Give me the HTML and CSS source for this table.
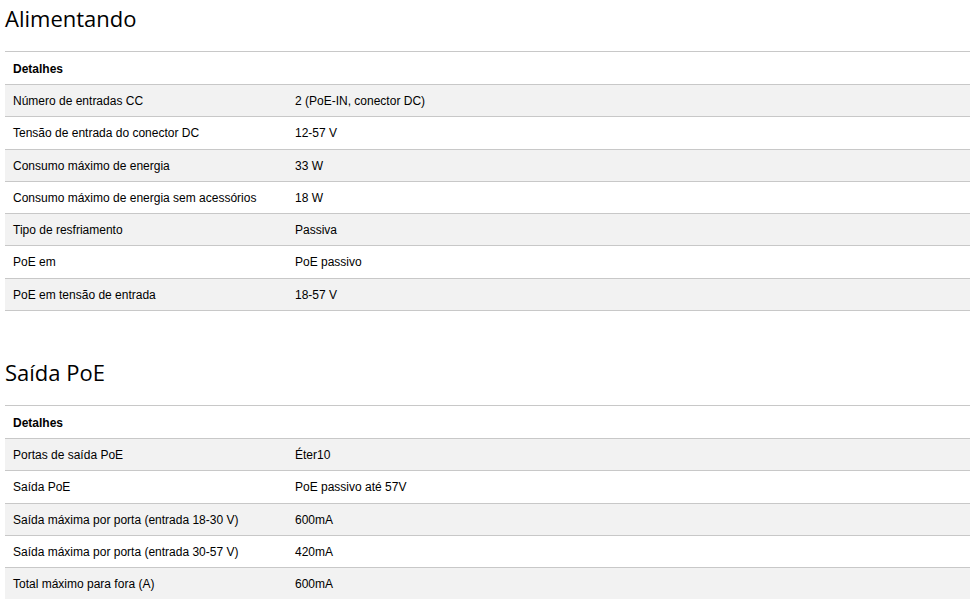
FILE: index.html
```html
<!DOCTYPE html>
<html lang="pt">
<head>
<meta charset="utf-8">
<link rel="stylesheet" href="styles.css">
</head>
<body>
<div class="page">
  <section class="spec">
    <h2 class="spec-title">Alimentando</h2>
    <table class="spec-table">
      <thead><tr><th colspan="2">Detalhes</th></tr></thead>
      <tbody>
        <tr><td class="k">Número de entradas CC</td><td>2 (PoE-IN, conector DC)</td></tr>
        <tr><td class="k">Tensão de entrada do conector DC</td><td>12-57 V</td></tr>
        <tr><td class="k">Consumo máximo de energia</td><td>33 W</td></tr>
        <tr><td class="k">Consumo máximo de energia sem acessórios</td><td>18 W</td></tr>
        <tr><td class="k">Tipo de resfriamento</td><td>Passiva</td></tr>
        <tr><td class="k">PoE em</td><td>PoE passivo</td></tr>
        <tr><td class="k">PoE em tensão de entrada</td><td>18-57 V</td></tr>
      </tbody>
    </table>
  </section>
  <section class="spec">
    <h2 class="spec-title">Saída PoE</h2>
    <table class="spec-table">
      <thead><tr><th colspan="2">Detalhes</th></tr></thead>
      <tbody>
        <tr><td class="k">Portas de saída PoE</td><td>Éter10</td></tr>
        <tr><td class="k">Saída PoE</td><td>PoE passivo até 57V</td></tr>
        <tr><td class="k">Saída máxima por porta (entrada 18-30 V)</td><td>600mA</td></tr>
        <tr><td class="k">Saída máxima por porta (entrada 30-57 V)</td><td>420mA</td></tr>
        <tr><td class="k">Total máximo para fora (A)</td><td>600mA</td></tr>
      </tbody>
    </table>
  </section>
</div>
</body>
</html>
```
FILE: styles.css
```css
html, body {
  margin: 0;
  padding: 0;
  background: #fff;
}
.page {
  padding: 0 0 0 5px;
  font-family: "Liberation Sans", Arial, sans-serif;
  color: #000;
}
.spec {
  margin-bottom: 43px;
}
.spec-title {
  font-family: "Open Sans", "Noto Sans", sans-serif;
  font-weight: 400;
  font-size: 22px;
  line-height: 36px;
  margin: 0 0 15px 0;
  color: #000;
}
.spec-table {
  width: 100%;
  border-collapse: collapse;
  font-size: 12px;
  border-top: 1px solid #c8c8c8;
}
.spec-table th,
.spec-table td {
  text-align: left;
  padding: 9px 8px 8px;
  line-height: 14.3px;
  border-bottom: 1px solid #c8c8c8;
}
.spec-table th {
  font-weight: 700;
  padding-top: 9.5px;
  padding-bottom: 8.2px;
}
.spec-table td.k {
  width: 266px;
}
.spec-table tbody tr:nth-child(odd) {
  background: #f2f2f2;
}
```
